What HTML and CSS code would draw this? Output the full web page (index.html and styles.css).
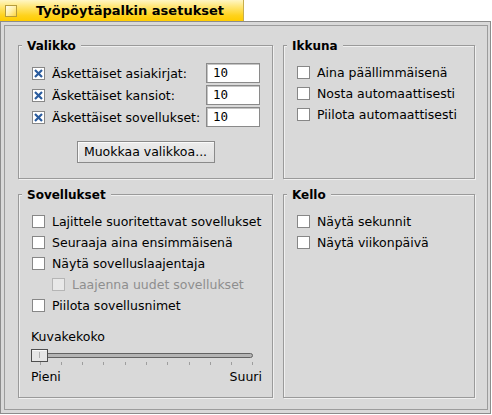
FILE: index.html
```html
<!DOCTYPE html>
<html lang="fi">
<head>
<meta charset="utf-8">
<title>Työpöytäpalkin asetukset</title>
<link rel="stylesheet" href="styles.css">
</head>
<body>
<div class="tab"><span class="tab-icon"></span><span class="tab-title">Työpöytäpalkin asetukset</span></div>
<div class="frame">
  <div class="inner">
    <div class="grid">
      <section class="group">
        <div class="legend">Valikko</div>
        <div class="menu-rows">
          <div class="menu-row"><span class="cb"><svg viewBox="0 0 11 11" width="11" height="11"><path d="M2 2L9 9M9 2L2 9" stroke="#2b5c9e" stroke-width="2.2" fill="none"/></svg></span><span class="lbl">Äskettäiset asiakirjat:</span><span class="num">10</span></div>
          <div class="menu-row"><span class="cb"><svg viewBox="0 0 11 11" width="11" height="11"><path d="M2 2L9 9M9 2L2 9" stroke="#2b5c9e" stroke-width="2.2" fill="none"/></svg></span><span class="lbl">Äskettäiset kansiot:</span><span class="num">10</span></div>
          <div class="menu-row"><span class="cb"><svg viewBox="0 0 11 11" width="11" height="11"><path d="M2 2L9 9M9 2L2 9" stroke="#2b5c9e" stroke-width="2.2" fill="none"/></svg></span><span class="lbl">Äskettäiset sovellukset:</span><span class="num">10</span></div>
        </div>
        <div class="btn-row"><span class="btn">Muokkaa valikkoa...</span></div>
      </section>
      <section class="group">
        <div class="legend">Ikkuna</div>
        <div class="checks">
          <div class="check"><span class="cb"></span><span class="lbl">Aina päällimmäisenä</span></div>
          <div class="check"><span class="cb"></span><span class="lbl">Nosta automaattisesti</span></div>
          <div class="check"><span class="cb"></span><span class="lbl">Piilota automaattisesti</span></div>
        </div>
      </section>
      <section class="group">
        <div class="legend">Sovellukset</div>
        <div class="checks">
          <div class="check"><span class="cb"></span><span class="lbl">Lajittele suoritettavat sovellukset</span></div>
          <div class="check"><span class="cb"></span><span class="lbl">Seuraaja aina ensimmäisenä</span></div>
          <div class="check"><span class="cb"></span><span class="lbl">Näytä sovelluslaajentaja</span></div>
          <div class="check sub disabled"><span class="cb"></span><span class="lbl">Laajenna uudet sovellukset</span></div>
          <div class="check"><span class="cb"></span><span class="lbl">Piilota sovellusnimet</span></div>
        </div>
        <div class="slider">
          <div class="slider-label">Kuvakekoko</div>
          <svg class="slider-svg" width="224" height="17" viewBox="0 0 224 17">
            <rect x="0.5" y="4.5" width="221" height="4" rx="2" fill="#b4b4b4" stroke="#626262"/>
            <g stroke="#9e9e9e" stroke-width="1">
              <line x1="9.5" y1="13" x2="9.5" y2="16"/>
              <line x1="30.5" y1="13" x2="30.5" y2="16"/>
              <line x1="51.5" y1="13" x2="51.5" y2="16"/>
              <line x1="72.5" y1="13" x2="72.5" y2="16"/>
              <line x1="94.5" y1="13" x2="94.5" y2="16"/>
              <line x1="115.5" y1="13" x2="115.5" y2="16"/>
              <line x1="136.5" y1="13" x2="136.5" y2="16"/>
              <line x1="158.5" y1="13" x2="158.5" y2="16"/>
              <line x1="179.5" y1="13" x2="179.5" y2="16"/>
              <line x1="200.5" y1="13" x2="200.5" y2="16"/>
              <line x1="221.5" y1="13" x2="221.5" y2="16"/>
            </g>
            <rect x="0.5" y="0.5" width="16" height="12" fill="#e6e6e6" stroke="#4e4e4e"/>
            <line x1="1.5" y1="1.5" x2="15.5" y2="1.5" stroke="#fafafa"/>
            <line x1="8.5" y1="3" x2="8.5" y2="9" stroke="#b0b0b0"/>
          </svg>
          <div class="range-labels"><span>Pieni</span><span>Suuri</span></div>
        </div>
      </section>
      <section class="group">
        <div class="legend">Kello</div>
        <div class="checks">
          <div class="check"><span class="cb"></span><span class="lbl">Näytä sekunnit</span></div>
          <div class="check"><span class="cb"></span><span class="lbl">Näytä viikonpäivä</span></div>
        </div>
      </section>
    </div>
  </div>
</div>
</body>
</html>
```

FILE: styles.css
```css
* { box-sizing: border-box; }
html, body { margin: 0; padding: 0; background: #fff; }
body {
  font-family: "DejaVu Sans", "Noto Sans", sans-serif;
  font-size: 12.5px;
  color: #000;
  width: 492px;
  height: 415px;
  overflow: hidden;
}
.tab {
  width: 244px;
  height: 21px;
  display: flex;
  align-items: center;
  background: linear-gradient(to bottom, #fff6c4 0%, #ffe570 35%, #ffd21a 75%, #ffcc00 100%);
  border-right: 1px solid #c8ae4c;
}
.tab-icon {
  width: 12px;
  height: 12px;
  margin-left: 5px;
  border: 1px solid #b69c3c;
  background: linear-gradient(135deg, #fffdf0 0%, #fff0a8 50%, #ffd640 100%);
}
.tab-title {
  margin-left: 19px;
  font-weight: bold;
  font-size: 13px;
  line-height: 21px;
}
.frame {
  width: 491px;
  height: 393px;
  border: 1px solid #8c8c8c;
  background: #d9d9d9;
  padding: 3px 2px 3px 3px;
}
.inner {
  height: 100%;
  border: 1px solid #9c9c9c;
  padding: 19px 12px 10px 13px;
}
.grid {
  display: grid;
  grid-template-columns: 255px 192px;
  grid-template-rows: 134px 204px;
  column-gap: 10px;
  row-gap: 15px;
}
.group {
  border: 1px solid #9a9a9a;
  box-shadow: 1px 1px 0 #f0f0f0, inset 1px 1px 0 #f0f0f0;
  display: flex;
  flex-direction: column;
}
.legend {
  align-self: flex-start;
  margin: -7px 0 0 3px;
  padding: 0 5px;
  background: #d9d9d9;
  font-weight: bold;
  font-size: 12px;
  line-height: 14px;
}
.cb {
  width: 13px;
  height: 13px;
  flex: none;
  border: 1px solid #878787;
  background: #fff;
  display: flex;
}
.cb svg { display: block; }
.lbl { margin-left: 7px; white-space: nowrap; }
.menu-rows {
  padding: 10px 12px 0 13px;
  display: flex;
  flex-direction: column;
  gap: 2px;
}
.menu-row {
  display: flex;
  align-items: center;
  height: 20px;
}
.menu-row .lbl { flex: 1; }
.num {
  width: 54px;
  height: 20px;
  flex: none;
  border: 1px solid #8a8a8a;
  box-shadow: inset 1px 1px 0 #c4c4c4;
  background: #fff;
  font-family: "DejaVu Sans Mono", monospace;
  font-size: 12.5px;
  line-height: 18px;
  padding-left: 6px;
}
.btn-row {
  display: flex;
  justify-content: center;
  margin-top: 14px;
}
.btn {
  width: 138px;
  height: 22px;
  border: 1px solid #8a8a8a;
  background: linear-gradient(to bottom, #ececec, #dedede);
  box-shadow: inset 1px 1px 0 #fafafa;
  display: flex;
  align-items: center;
  justify-content: center;
  line-height: 20px;
}
.checks { padding: 9px 0 0 13px; }
.check {
  display: flex;
  align-items: center;
  height: 21px;
}
.check.sub { padding-left: 20px; }
.check.disabled .cb { background: #e8e8e8; border-color: #b5b5b5; }
.check.disabled .lbl { color: #8e8e8e; }
.slider { padding: 10px 10px 0 12px; }
.slider-label { line-height: 21px; }
.slider-svg { display: block; margin-top: 2px; }
.range-labels {
  display: flex;
  justify-content: space-between;
  line-height: 21px;
}
```
